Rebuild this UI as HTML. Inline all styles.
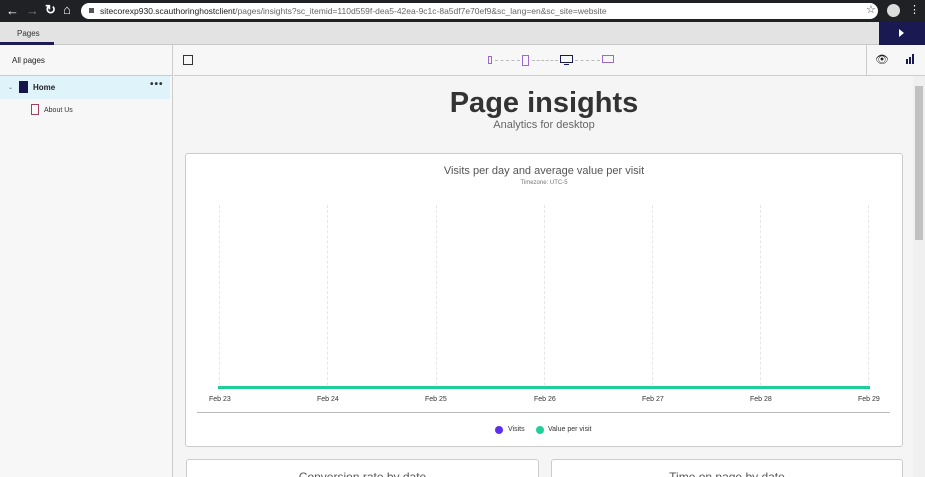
<!DOCTYPE html>
<html><head><style>
*{margin:0;padding:0;box-sizing:border-box}
html,body{width:925px;height:477px;overflow:hidden}
body{font-family:"Liberation Sans",sans-serif;background:#f5f5f5;position:relative}
.a{position:absolute}
</style></head><body>
<div class="a" style="left:0;top:0;width:925px;height:22px;background:#202124"></div>
<div class="a" style="left:6px;top:3px;color:#fff;font-size:13px">←</div>
<div class="a" style="left:26px;top:3px;color:#777;font-size:13px">→</div>
<div class="a" style="left:45px;top:2px;color:#fff;font-size:13px;font-weight:bold">↻</div>
<div class="a" style="left:63px;top:2px;color:#fff;font-size:13px">⌂</div>
<div class="a" style="left:81px;top:3px;width:797px;height:16px;background:#fff;border-radius:8px"></div>
<div class="a" style="left:89px;top:8px;width:5px;height:5px;background:#555"></div>
<div class="a" style="left:100px;top:6px;font-size:8.5px;color:#222">sitecorexp930.scauthoringhostclient<span style="color:#666">/pages/insights?sc_itemid=110d559f-dea5-42ea-9c1c-8a5df7e70ef9&amp;sc_lang=en&amp;sc_site=website</span></div>
<div class="a" style="left:866px;top:3px;font-size:11px;color:#444">☆</div>
<div class="a" style="left:887px;top:4px;width:13px;height:13px;border-radius:50%;background:#ddd"></div>
<div class="a" style="left:909px;top:3px;color:#fff;font-size:11px">⋮</div>
<div class="a" style="left:0;top:22px;width:925px;height:23px;background:#e3e3e3;border-bottom:1px solid #c8c8c8"></div>
<div class="a" style="left:17px;top:29px;font-size:8px;color:#333">Pages</div>
<div class="a" style="left:0;top:42px;width:54px;height:3px;background:#1b1b55"></div>
<div class="a" style="left:879px;top:22px;width:46px;height:23px;background:#1a1a52"></div>
<div class="a" style="left:899px;top:29px;width:0;height:0;border-left:5px solid #fff;border-top:4px solid transparent;border-bottom:4px solid transparent"></div>
<div class="a" style="left:0;top:45px;width:173px;height:432px;background:#f7f7f7;border-right:1px solid #ccc"></div>
<div class="a" style="left:0;top:45px;width:173px;height:31px;border-bottom:1px solid #ccc;border-right:1px solid #ccc"></div>
<div class="a" style="left:12px;top:56px;font-size:8px;color:#222">All pages</div>
<div class="a" style="left:0;top:76px;width:170px;height:23px;background:#dff3fb"></div>
<div class="a" style="left:8px;top:84px;font-size:6px;color:#666">⌄</div>
<div class="a" style="left:19px;top:81px;width:9px;height:12px;background:#14144a"></div>
<div class="a" style="left:33px;top:83px;font-size:8px;font-weight:bold;color:#222">Home</div>
<div class="a" style="left:150px;top:79px;font-size:10px;font-weight:bold;color:#333;letter-spacing:1px">•••</div>
<div class="a" style="left:31px;top:104px;width:8px;height:11px;border:1px solid #a04060"></div>
<div class="a" style="left:44px;top:107px;font-size:7px;color:#333">About Us</div>
<div class="a" style="left:174px;top:45px;width:751px;height:31px;background:#f7f7f7;border-bottom:1px solid #ccc"></div>
<div class="a" style="left:866px;top:45px;width:1px;height:30px;background:#ccc"></div>
<div class="a" style="left:183px;top:55px;width:10px;height:10px;border:1px solid #333"></div>
<div class="a" style="left:488px;top:56px;width:4px;height:8px;border:1px solid #9a6ad0"></div>
<div class="a" style="left:495px;top:60px;width:25px;border-top:1px dashed #bbb"></div>
<div class="a" style="left:522px;top:55px;width:7px;height:11px;border:1px solid #9a6ad0"></div>
<div class="a" style="left:532px;top:60px;width:26px;border-top:1px dashed #bbb"></div>
<div class="a" style="left:560px;top:55px;width:13px;height:8px;border:1.5px solid #1a1a52"></div>
<div class="a" style="left:564px;top:64px;width:5px;height:1px;background:#1a1a52"></div>
<div class="a" style="left:575px;top:60px;width:25px;border-top:1px dashed #bbb"></div>
<div class="a" style="left:602px;top:55px;width:12px;height:8px;border:1px solid #9a6ad0"></div>
<div class="a" style="left:875px;top:53px;font-size:11px;color:#222">👁</div>
<div class="a" style="left:906px;top:59px;width:2px;height:5px;background:#1a1a52"></div>
<div class="a" style="left:909px;top:57px;width:2px;height:7px;background:#1a1a52"></div>
<div class="a" style="left:912px;top:54px;width:2px;height:10px;background:#1a1a52"></div>
<div class="a" style="left:913px;top:76px;width:12px;height:401px;background:#f0f0f0"></div>
<div class="a" style="left:915px;top:86px;width:8px;height:154px;background:#c1c1c1"></div>
<div class="a" style="left:174px;top:87px;width:740px;text-align:center;font-size:29px;font-weight:bold;color:#333">Page insights</div>
<div class="a" style="left:174px;top:119px;width:740px;text-align:center;font-size:11px;color:#666">Analytics for desktop</div>
<div class="a" style="left:185px;top:153px;width:718px;height:294px;background:#fff;border:1px solid #ccc;border-radius:3px"></div>
<div class="a" style="left:185px;top:165px;width:718px;text-align:center;font-size:11px;color:#555">Visits per day and average value per visit</div>
<div class="a" style="left:185px;top:180px;width:718px;text-align:center;font-size:6px;color:#777">Timezone: UTC-5</div>
<div class="a" style="left:219px;top:205px;height:180px;border-left:1px dashed #e6e6e6"></div>
<div class="a" style="left:327px;top:205px;height:180px;border-left:1px dashed #e6e6e6"></div>
<div class="a" style="left:436px;top:205px;height:180px;border-left:1px dashed #e6e6e6"></div>
<div class="a" style="left:544px;top:205px;height:180px;border-left:1px dashed #e6e6e6"></div>
<div class="a" style="left:652px;top:205px;height:180px;border-left:1px dashed #e6e6e6"></div>
<div class="a" style="left:760px;top:205px;height:180px;border-left:1px dashed #e6e6e6"></div>
<div class="a" style="left:868px;top:205px;height:180px;border-left:1px dashed #e6e6e6"></div>
<div class="a" style="left:218px;top:386px;width:652px;height:3px;background:#1fcf9a"></div>
<div class="a" style="left:209px;top:396px;font-size:7px;color:#333">Feb 23</div>
<div class="a" style="left:317px;top:396px;font-size:7px;color:#333">Feb 24</div>
<div class="a" style="left:425px;top:396px;font-size:7px;color:#333">Feb 25</div>
<div class="a" style="left:534px;top:396px;font-size:7px;color:#333">Feb 26</div>
<div class="a" style="left:642px;top:396px;font-size:7px;color:#333">Feb 27</div>
<div class="a" style="left:750px;top:396px;font-size:7px;color:#333">Feb 28</div>
<div class="a" style="left:858px;top:396px;font-size:7px;color:#333">Feb 29</div>
<div class="a" style="left:197px;top:412px;width:693px;height:1px;background:#bbb"></div>
<div class="a" style="left:495px;top:426px;width:8px;height:8px;border-radius:50%;background:#5b2ef0"></div>
<div class="a" style="left:508px;top:426px;font-size:7px;color:#333">Visits</div>
<div class="a" style="left:536px;top:426px;width:8px;height:8px;border-radius:50%;background:#1fcf9a"></div>
<div class="a" style="left:548px;top:426px;font-size:7px;color:#333">Value per visit</div>
<div class="a" style="left:186px;top:459px;width:353px;height:30px;background:#fff;border:1px solid #ccc;border-radius:3px"></div>
<div class="a" style="left:551px;top:459px;width:352px;height:30px;background:#fff;border:1px solid #ccc;border-radius:3px"></div>
<div class="a" style="left:186px;top:470px;width:353px;text-align:center;font-size:12px;color:#555">Conversion rate by date</div>
<div class="a" style="left:551px;top:470px;width:352px;text-align:center;font-size:12px;color:#555">Time on page by date</div>
</body></html>
